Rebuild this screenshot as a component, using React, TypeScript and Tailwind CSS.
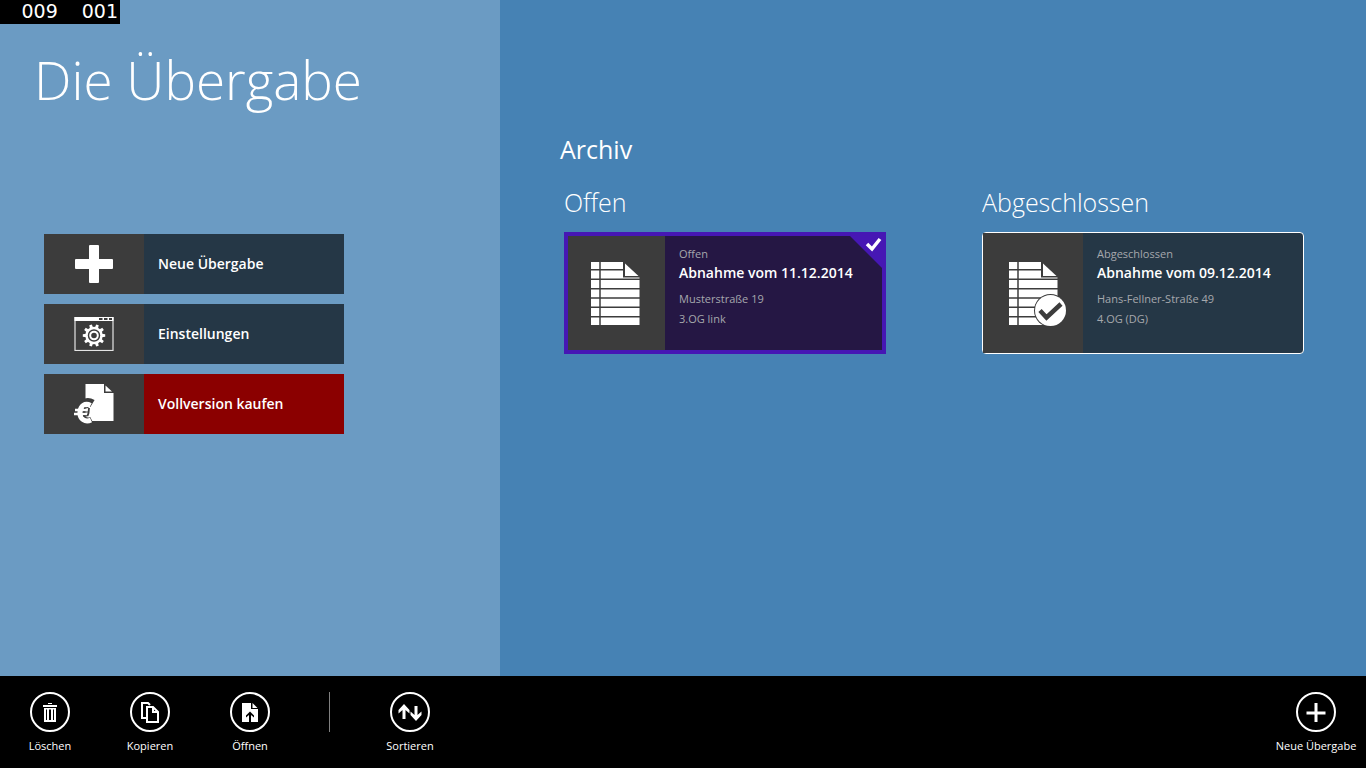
import React from 'react';
import clsx from 'clsx';

const PlusIcon = () => (
  <svg width="38" height="38" viewBox="0 0 38 38" fill="white" aria-hidden="true">
    <rect x="14" y="0" width="10" height="38" rx="1" />
    <rect x="0" y="14" width="38" height="10" rx="1" />
  </svg>
);

const teeth = [0, 36, 72, 108, 144, 180, 216, 252, 288, 324];

const SettingsIcon = () => (
  <svg width="40" height="34" viewBox="0 0 40 34" fill="none" aria-hidden="true">
    <rect x="1" y="0.5" width="38" height="33" stroke="#e4e4e4" strokeWidth="1.2" />
    <path d="M0.5 0H39.5V4H0.5Z" fill="white" />
    <path d="M25 1H28.5V3H25ZM30 1H33.500V3H30ZM35 1H38V3H35Z" fill="#3c3c3c" />
    <circle cx="20" cy="18.500" r="7.500" stroke="white" strokeWidth="2.500" />
    <circle cx="20" cy="18.500" r="3.800" stroke="white" strokeWidth="2" />
    {teeth.map((angle) => (
      <path key={angle} d="M18.300 10.800L18.700 7.300H21.300L21.700 10.800Z" fill="white" transform={`rotate(${angle + 18} 20 18.5)`} />
    ))}
  </svg>
);

const BuyIcon = () => (
  <svg width="40" height="40" viewBox="-1 0 40 40" fill="none" aria-hidden="true">
    <path d="M10.500 0H29V9H38.500V37H10.500Z" fill="white" />
    <path d="M29 0V9H38.500Z" fill="#3c3c3c" />
    <path d="M30.500 1.500V7.500H37Z" fill="white" />
    <path d="M17.500 19.500C11 15.500 5 20.500 4.500 27.500C4 35 11 39.500 17 36.500" stroke="#3c3c3c" strokeWidth="8" />
    <path d="M15.500 21.500C10 18.500 5.500 22 5 28C4.500 35.500 10.500 38.500 16 36" stroke="white" strokeWidth="5" />
    <path d="M0 26H13M-1 30H12" stroke="white" strokeWidth="2.400" />
    <path d="M9 24.200L13.500 23.500M8 28H13.500M8 31.800H12.500" stroke="#3c3c3c" strokeWidth="1.200" />
    <path d="M14 24L13.500 29L12.500 32" stroke="#3c3c3c" strokeWidth="1.800" />
  </svg>
);

const DocumentIcon = ({ done }: { done?: boolean }) => (
  <svg width="58" height="66" viewBox="0 -2 58 66" fill="none" overflow="visible" aria-hidden="true">
    <path d="M0 0H32V15.500H48.500V63H0Z" fill="white" />
    <path d="M0 7.800H32M0 17.200H49M0 26.700H49M0 36H49M0 45.300H49M0 54.700H49" stroke="#3c3c3c" strokeWidth="1.500" />
    <path d="M9 0V63" stroke="#3c3c3c" strokeWidth="1.500" />
    <path d="M34 1.500V14H47.500Z" fill="white" />
    {done && (
      <>
        <circle cx="41.500" cy="48.500" r="16.500" fill="#3c3c3c" />
        <circle cx="41.500" cy="48.500" r="15.500" fill="white" />
        <path d="M31 48.500L37.500 55.500L52 42" stroke="#3c3c3c" strokeWidth="4.500" />
      </>
    )}
  </svg>
);

const TrashIcon = () => (
  <svg width="14" height="20" viewBox="0 0 14 20" fill="white" aria-hidden="true">
    <path d="M0 3H14V5H0Z" />
    <path d="M5 1H9V2H5Z" />
    <path d="M1 6H13V20H1Z" />
    <path d="M3 7.500H4V18H3ZM6 7.500H8V18H6ZM10 7.500H11V18H10Z" fill="black" />
  </svg>
);

const CopyIcon = () => (
  <svg width="20" height="22" viewBox="0 0 20 22" fill="none" stroke="white" strokeWidth="2" aria-hidden="true">
    <path d="M6 17H2V2H8L10 4" />
    <path d="M7 6H13L18 11V21H7Z" />
    <path d="M13 6V11H18" />
  </svg>
);

const OpenIcon = () => (
  <svg width="16" height="20" viewBox="0 0 16 20" fill="white" aria-hidden="true">
    <path d="M0 1H9V7H16V20H0Z" />
    <path d="M10.500 1V6H15.500Z" />
    <path d="M8 9.500L12 13.500V15.500L9 13V20H7V13L4 15.500V13.500Z" fill="black" />
  </svg>
);

const SortIcon = () => (
  <svg width="24" height="18" viewBox="0 0 24 18" fill="white" aria-hidden="true">
    <path d="M6 1L11.500 7V10.500L7.500 7V16H4.500V7L0.500 10.500V7Z" />
    <path d="M18 18L23.500 12V8.500L19.500 12V3H16.500V12L12.500 8.500V12Z" />
  </svg>
);

const AddIcon = () => (
  <svg width="20" height="20" viewBox="0 0 20 20" stroke="white" strokeWidth="3" aria-hidden="true">
    <path d="M10 1V20M0.500 11H19.500" />
  </svg>
);

const menu = [
  { label: 'Neue Übergabe', icon: <PlusIcon />, color: 'bg-[#253746]' },
  { label: 'Einstellungen', icon: <SettingsIcon />, color: 'bg-[#253746]' },
  { label: 'Vollversion kaufen', icon: <BuyIcon />, color: 'bg-[#8b0000]' },
];

type Entry = {
  status: string;
  title: string;
  street: string;
  floor: string;
  selected?: boolean;
  done?: boolean;
};

const entries: Entry[] = [
  { status: 'Offen', title: 'Abnahme vom 11.12.2014', street: 'Musterstraße 19', floor: '3.OG link', selected: true },
  { status: 'Abgeschlossen', title: 'Abnahme vom 09.12.2014', street: 'Hans-Fellner-Straße 49', floor: '4.OG (DG)', done: true },
];

const ArchiveCard = ({ entry }: { entry: Entry }) => (
  <button
    type="button"
    aria-pressed={!!entry.selected}
    className={clsx(
      'relative flex h-[122px] w-[322px] text-left',
      entry.selected ? 'border-4 border-[#4617b4] bg-[#251744]' : 'rounded-sm border border-white bg-[#253746]'
    )}
  >
    <span
      className={clsx(
        'flex h-full shrink-0 items-center bg-[#3c3c3c]',
        entry.selected ? 'w-[97px] pl-[23px]' : 'w-[100px] pl-[26px]'
      )}
    >
      <DocumentIcon done={entry.done} />
    </span>
    <span className={clsx('flex flex-col pl-[14px] text-[11px] leading-5 text-[#a5a8ad]', entry.selected ? 'pt-2' : 'pt-[11px]')}>
      <span>{entry.status}</span>
      <span className="text-sm leading-[18px] font-semibold text-white">{entry.title}</span>
      <span className="mt-[7px]">{entry.street}</span>
      <span>{entry.floor}</span>
    </span>
    {entry.selected && (
      <svg className="absolute top-0 right-0" width="32" height="32" viewBox="0 0 32 32" fill="none" overflow="visible" aria-hidden="true">
        <path d="M0 0H32V32Z" fill="#4617b4" />
        <path d="M17 8L22 13L30 3" stroke="white" strokeWidth="3.500" />
      </svg>
    )}
  </button>
);

const BarButton = ({ label, children }: { label: string; children: React.ReactNode }) => (
  <button type="button" className="flex w-[100px] flex-col items-center gap-1 text-[11px] leading-5 whitespace-nowrap text-white">
    <span className="flex size-10 items-center justify-center rounded-full border-2 border-white">{children}</span>
    {label}
  </button>
);

const App = () => {
  return (
    <div className="flex min-h-screen flex-col bg-[#4682b4] font-['Open_Sans','Noto_Sans',sans-serif] text-white">
      {/* Frame counter */}
      <div className="absolute top-0 left-0 flex h-6 w-[120px] justify-end gap-6 bg-black pr-[2px] font-['DejaVu_Sans',sans-serif] text-[19px] leading-[22px]">
        <span>009</span>
        <span>001</span>
      </div>

      <main className="flex flex-1">
        <section className="w-[500px] shrink-0 bg-[#6b9bc3] pt-10">
          <h1 className="pl-[34px] text-[53px] leading-[80px] font-light whitespace-nowrap">Die Übergabe</h1>
          <nav className="mt-[114px] flex w-[344px] flex-col gap-[10px] pl-11">
            {menu.map((item) => (
              <button key={item.label} type="button" className={clsx('flex h-[60px] items-center text-sm font-semibold', item.color)}>
                <span className="flex h-full w-[100px] items-center justify-center bg-[#3c3c3c]">{item.icon}</span>
                <span className="pl-[14px]">{item.label}</span>
              </button>
            ))}
          </nav>
        </section>

        <section className="flex-1 pt-[129px] pl-[60px]">
          <h2 className="text-[25px] leading-10">Archiv</h2>
          <div className="mt-[13px] flex gap-24 pl-1">
            {entries.map((entry) => (
              <div key={entry.status}>
                <h3 className="mb-[10px] text-[25px] leading-10 font-light">{entry.status}</h3>
                <ArchiveCard entry={entry} />
              </div>
            ))}
          </div>
        </section>
      </main>

      <footer className="flex h-[92px] items-start bg-black pt-4">
        <BarButton label="Löschen"><TrashIcon /></BarButton>
        <BarButton label="Kopieren"><CopyIcon /></BarButton>
        <BarButton label="Öffnen"><OpenIcon /></BarButton>
        <div className="mr-[30px] ml-[29px] h-10 w-px bg-[#808080]" />
        <BarButton label="Sortieren"><SortIcon /></BarButton>
        <div className="ml-auto">
          <BarButton label="Neue Übergabe"><AddIcon /></BarButton>
        </div>
      </footer>
    </div>
  );
};

export default App;
